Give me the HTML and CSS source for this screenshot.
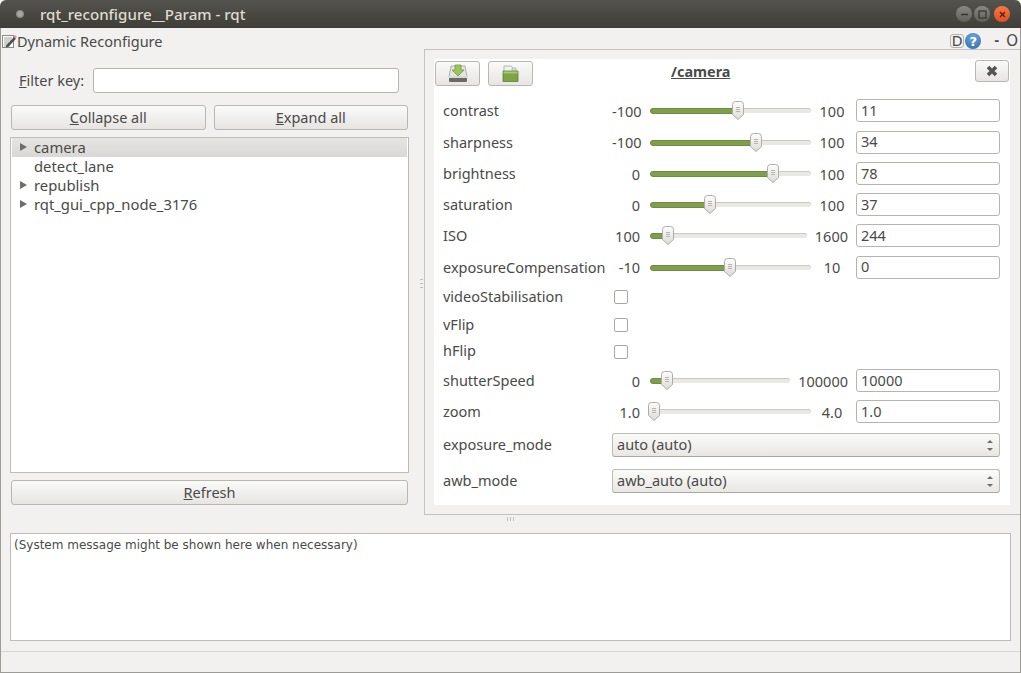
FILE: index.html
```html
<!DOCTYPE html>
<html lang="en">
<head>
<meta charset="utf-8">
<title>rqt_reconfigure__Param - rqt</title>
<link rel="stylesheet" href="styles.css">
</head>
<body>
<svg class="defs" width="0" height="0" aria-hidden="true">
  <defs>
    <linearGradient id="hg" x1="0" y1="0" x2="0" y2="1"><stop offset="0" stop-color="#fdfdfc"/><stop offset="1" stop-color="#dcdbd8"/></linearGradient>
    <symbol id="handle" viewBox="0 0 12 19">
      <path d="M.5 3.5a3 3 0 0 1 3-3h5a3 3 0 0 1 3 3v10L6 18.5.5 13.5z" fill="url(#hg)" stroke="#aeaca6"/>
      <path d="M4 6.5h4M4 8.5h4M4 10.5h4" stroke="#b4b3ae" stroke-width="1"/>
    </symbol>
  </defs>
</svg>
<div class="window">
  <header class="titlebar">
    <span class="tb-dot"></span>
    <span class="tb-title">rqt_reconfigure__Param - rqt</span>
    <span class="tb-btns">
      <span class="wbtn"><svg width="9" height="9" viewBox="0 0 9 9"><path d="M1 4.5h7" stroke="#33322f" stroke-width="1.4"/></svg></span>
      <span class="wbtn"><svg width="9" height="9" viewBox="0 0 9 9"><rect x="1" y="1" width="7" height="7" fill="none" stroke="#33322f" stroke-width="1.2"/></svg></span>
      <span class="wbtn wbtn-close"><svg width="9" height="9" viewBox="0 0 9 9"><path d="M2 2l5 5M7 2l-5 5" stroke="#5a1c08" stroke-width="1.4"/></svg></span>
    </span>
  </header>
  <div class="content">
    <div class="dock-title">
      <svg class="doc-icon" width="16" height="16" viewBox="0 0 16 16">
        <rect x="1.5" y="2.5" width="11" height="12" fill="#fff" stroke="#8a8a86"/>
        <path d="M3 5h8M3 7h7M3 9h5M3 11h4M3 13h6" stroke="#a0a09c"/>
        <path d="M5.500 12l7.500-8 2 1.800-7.500 8-2.800.8z" fill="#4e4e4a"/>
        <path d="M12.800 3.500l1-1.500 2 1.500-1 2z" fill="#d68ac4"/>
      </svg>
      <span class="dock-name">Dynamic Reconfigure</span>
      <span class="dock-tools">
        <span class="d-btn">D</span>
        <span class="help">?</span>
        <span class="dash">-</span>
        <span class="oh">O</span>
      </span>
    </div>
    <div class="main">
      <section class="left">
        <div class="filter">
          <label class="filter-label"><u>F</u>ilter key:</label>
          <input class="field filter-input" type="text">
        </div>
        <div class="btn-row">
          <button class="btn btn-half"><u>C</u>ollapse all</button>
          <button class="btn btn-half"><u>E</u>xpand all</button>
        </div>
        <ul class="tree">
          <li class="node selected"><span class="arrow"></span>camera</li>
          <li class="node"><span class="arrow arrow-none"></span>detect_lane</li>
          <li class="node"><span class="arrow"></span>republish</li>
          <li class="node"><span class="arrow"></span>rqt_gui_cpp_node_3176</li>
        </ul>
        <button class="btn btn-refresh"><u>R</u>efresh</button>
        <span class="vgrip"></span>
      </section>
      <section class="right">
        <div class="sheet">
          <div class="sheet-head">
            <button class="btn icon-btn">
              <svg width="22" height="20" viewBox="0 0 22 20">
                <path d="M4 2h14l2 11H2z" fill="#e4e4e0" stroke="#b0b0ac"/>
                <rect x="2" y="12" width="18" height="6" rx="1" fill="#6a6a66"/>
                <rect x="2" y="12" width="18" height="2" fill="#d8d8d4"/>
                <path d="M8 1h6v5h3l-6 6-6-6h3z" fill="#9cc65a" stroke="#76993f" stroke-width=".8"/>
              </svg>
            </button>
            <button class="btn icon-btn">
              <svg width="18" height="18" viewBox="0 0 18 18">
                <path d="M2 1h7l3 3v6H2z" fill="#f2f2f0" stroke="#b4b4b0"/>
                <path d="M10 3h4v4h-4z" fill="#d8d8d4" stroke="#b4b4b0" stroke-width=".7"/>
                <path d="M1 6h15v10.500H1z" fill="#7da346" stroke="#5f8232" stroke-width=".8"/>
                <path d="M1.500 6.500h14v2h-14z" fill="#a9c97a"/>
              </svg>
            </button>
            <span class="sheet-title">/camera</span>
            <button class="btn close-btn">
              <svg width="14" height="14" viewBox="0 0 14 14"><path d="M3 3l8 8M11 3l-8 8" stroke="#55554f" stroke-width="3.600"/></svg>
            </button>
          </div>

          <div class="row h31"><span class="name">contrast</span><span class="min">-100</span>
            <div class="slider" style="--v:.555"><span class="fill"></span><svg class="handle"><use href="#handle"/></svg></div>
            <span class="max">100</span><input class="field val" value="11"></div>
          <div class="row h32"><span class="name">sharpness</span><span class="min">-100</span>
            <div class="slider" style="--v:.67"><span class="fill"></span><svg class="handle"><use href="#handle"/></svg></div>
            <span class="max">100</span><input class="field val" value="34"></div>
          <div class="row h31"><span class="name">brightness</span><span class="min">0</span>
            <div class="slider" style="--v:.78"><span class="fill"></span><svg class="handle"><use href="#handle"/></svg></div>
            <span class="max">100</span><input class="field val" value="78"></div>
          <div class="row h31"><span class="name">saturation</span><span class="min">0</span>
            <div class="slider" style="--v:.37"><span class="fill"></span><svg class="handle"><use href="#handle"/></svg></div>
            <span class="max">100</span><input class="field val" value="37"></div>
          <div class="row h31"><span class="name">ISO</span><span class="min">100</span>
            <div class="slider slider-short" style="--v:.096"><span class="fill"></span><svg class="handle"><use href="#handle"/></svg></div>
            <span class="max">1600</span><input class="field val" value="244"></div>
          <div class="row h32"><span class="name">exposureCompensation</span><span class="min">-10</span>
            <div class="slider" style="--v:.5"><span class="fill"></span><svg class="handle"><use href="#handle"/></svg></div>
            <span class="max">10</span><input class="field val" value="0"></div>
          <div class="row h28"><span class="name name-up">videoStabilisation</span><span class="check"></span></div>
          <div class="row h27"><span class="name">vFlip</span><span class="check"></span></div>
          <div class="row h27"><span class="name name-up">hFlip</span><span class="check"></span></div>
          <div class="row h31"><span class="name">shutterSpeed</span><span class="min">0</span>
            <div class="slider slider-short" style="--v:.1"><span class="fill"></span><svg class="handle"><use href="#handle"/></svg></div>
            <span class="max">100000</span><input class="field val" value="10000"></div>
          <div class="row h31"><span class="name">zoom</span><span class="min">1.0</span>
            <div class="slider" style="--v:0"><span class="fill"></span><svg class="handle"><use href="#handle"/></svg></div>
            <span class="max">4.0</span><input class="field val" value="1.0"></div>
          <div class="row h36"><span class="name name-up">exposure_mode</span>
            <div class="combo">auto (auto)<span class="spin"><i class="up"></i><i class="down"></i></span></div></div>
          <div class="row h36"><span class="name name-up">awb_mode</span>
            <div class="combo">awb_auto (auto)<span class="spin"><i class="up"></i><i class="down"></i></span></div></div>
        </div>
      </section>
    </div>
    <div class="hsplit"><span class="hgrip"></span></div>
    <div class="message">(System message might be shown here when necessary)</div>
    <footer class="status"></footer>
  </div>
</div>
</body>
</html>
```
FILE: styles.css
```css
* { box-sizing: border-box; }
html, body { margin: 0; padding: 0; }
body {
  width: 1021px;
  height: 673px;
  overflow: hidden;
  background: #fff;
  font-family: "Noto Sans", "Open Sans", sans-serif;
  font-size: 14.5px;
  color: #4a4a48;
}
.defs { position: absolute; }
.window { display: flex; flex-direction: column; width: 1021px; height: 673px; }

.titlebar {
  display: flex;
  align-items: center;
  height: 28px;
  flex: none;
  padding: 0 11px 0 15px;
  border-radius: 6px 6px 0 0;
  background: linear-gradient(#55534d, #3e3d38);
  color: #dfdbd2;
}
.tb-dot {
  width: 8px;
  height: 8px;
  margin-left: 1px;
  border-radius: 50%;
  background: radial-gradient(circle, #a8a7a2 35%, #66655e 100%);
}
.tb-title { margin-left: 16px; font-size: 15.1px; font-weight: 500; }
.tb-btns { display: flex; gap: 2px; margin-left: auto; }
.wbtn {
  display: flex;
  align-items: center;
  justify-content: center;
  width: 16px;
  height: 16px;
  border-radius: 50%;
  background: linear-gradient(#8a8982, #5f5e58);
}
.wbtn-close { margin-left: 2px; background: linear-gradient(#f27a45, #e0501f); }

.content {
  display: flex;
  flex-direction: column;
  flex: 1;
  min-height: 0;
  border: 1px solid #9c9b96;
  border-top: 0;
  background: #f2f1f0;
}
.dock-title { display: flex; align-items: center; height: 21px; flex: none; padding-top: 5px; }
.doc-icon { flex: none; }
.dock-tools { display: flex; align-items: center; margin-left: auto; }
.d-btn {
  display: flex;
  align-items: center;
  justify-content: center;
  width: 14px;
  height: 14px;
  border: 1px solid #b4b3ae;
  border-radius: 3px;
  font: 14px "DejaVu Sans", sans-serif;
}
.help {
  display: flex;
  align-items: center;
  justify-content: center;
  width: 16px;
  height: 16px;
  margin-left: 1px;
  border-radius: 50%;
  background: radial-gradient(circle at 50% 30%, #6ea6dc, #2a6aa8);
  color: #fff;
  font: bold 13px "DejaVu Sans", sans-serif;
}
.dash { margin-left: 13px; font: bold 12px "DejaVu Sans", sans-serif; }
.oh { margin: 0 2px 0 7px; font: 15px "DejaVu Sans", sans-serif; }

.main { display: flex; height: 466px; flex: none; }
.left {
  position: relative;
  display: flex;
  flex-direction: column;
  width: 423px;
  flex: none;
  padding: 0 15px 0 9px;
}
.vgrip {
  position: absolute;
  left: 419px;
  top: 230px;
  width: 3px;
  height: 9px;
  border-top: 1px solid #c0bfba;
  border-bottom: 1px solid #c0bfba;
  background: linear-gradient(transparent 3px, #c0bfba 3px, #c0bfba 4px, transparent 4px);
}
.filter { display: flex; align-items: center; height: 25px; margin-top: 19px; flex: none; padding-left: 9px; }
.filter-label { width: 74px; flex: none; margin-top: -2px; }
.filter-input { width: 306px; height: 25px; }
.field {
  border: 1px solid #b6b4ae;
  border-radius: 3px;
  background: #fff;
  color: #4a4a48;
  font: 14.5px "Noto Sans", sans-serif;
  padding: 0 4px 2px;
  outline: none;
}
.btn-row { display: flex; gap: 8px; margin-top: 12px; padding: 0 1px; flex: none; }
.btn {
  display: flex;
  align-items: center;
  justify-content: center;
  padding: 0 0 2px;
  border: 1px solid #b9b7b0;
  border-radius: 3px;
  background: linear-gradient(#fafaf9, #e6e5e2);
  color: #4a4a48;
  font: 14.5px "Noto Sans", sans-serif;
}
.btn-half { flex: 1; height: 25px; }
.tree {
  height: 336px;
  margin: 7px 0 0;
  padding: 0 1px;
  list-style: none;
  flex: none;
  border: 1px solid #bdbcb6;
  background: #fff;
  font-size: 14.8px;
}
.node { display: flex; align-items: center; height: 19px; padding: 0 0 2px 8px; }
.selected { background: linear-gradient(#e6e4e1, #dad8d4); }
.arrow {
  width: 0;
  height: 0;
  margin-right: 7px;
  border-left: 7px solid #6e6e6a;
  border-top: 4px solid transparent;
  border-bottom: 4px solid transparent;
}
.arrow-none { border-left-color: transparent; }
.btn-refresh { height: 25px; margin: 7px 1px 0; flex: none; }

.right {
  flex: 1;
  padding: 9px 10px 9px 9px;
  border: 1px solid #c4c2bc;
  border-right: 0;
}
.sheet { height: 446px; background: #fff; }
.sheet-head { position: relative; display: flex; align-items: flex-start; height: 36px; padding: 2px 0 0 1px; }
.icon-btn { width: 45px; height: 25px; margin-right: 8px; padding: 0; }
.sheet-title { margin: 1px 0 0 130px; font-size: 14.4px; font-weight: 700; text-decoration: underline; }
.close-btn { width: 34px; height: 22px; margin: -1px 1px 0 auto; padding: 0; }

.row { display: flex; align-items: center; padding: 0 10px 0 9px; }
.h27 { height: 27px; }
.h28 { height: 28px; }
.h31 { height: 31px; }
.h32 { height: 32px; }
.h36 { height: 36px; }
.name { width: 169px; flex: none; margin-top: -1px; }
.name-up { margin-top: -3px; }
.min { width: 28px; flex: none; text-align: right; }
.max { min-width: 32px; margin-left: 5px; flex: none; text-align: center; }
.slider {
  position: relative;
  flex: 1;
  height: 5px;
  margin-left: 10px;
  border-radius: 3px;
  border-top: 1px solid #c9c8c2;
  background: #e9e8e5;
}
.slider-short { margin-right: 3px; }
.fill {
  position: absolute;
  left: 0;
  top: -1px;
  height: 6px;
  width: calc(var(--v) * (100% - 9px) + 4px);
  border-radius: 3px;
  border: 1px solid #6f8c3f;
  background: #7f9f4c;
}
.handle {
  position: absolute;
  top: -8px;
  left: calc(var(--v) * (100% - 9px) - 2px);
  width: 12px;
  height: 19px;
}
.val { width: 144px; height: 23px; margin-left: 8px; flex: none; }
.check {
  width: 14px;
  height: 14px;
  margin-left: 2px;
  border: 1px solid #a9a7a1;
  border-radius: 2px;
  background: #fff;
}
.combo {
  display: flex;
  align-items: center;
  justify-content: space-between;
  width: 388px;
  height: 24px;
  padding: 0 6px 2px 4px;
  border: 1px solid #bdbbb5;
  border-bottom-color: #a9a7a1;
  border-radius: 3px;
  background: linear-gradient(#fbfbfa, #e8e7e4);
}
.spin { display: flex; flex-direction: column; gap: 5px; margin-top: 2px; }
.spin i { display: block; width: 0; height: 0; border-left: 3px solid transparent; border-right: 3px solid transparent; }
.spin .up { border-bottom: 3px solid #6e6e68; }
.spin .down { border-top: 3px solid #6e6e68; }

.hsplit { display: flex; justify-content: center; height: 18px; flex: none; padding-top: 2px; }
.hgrip {
  width: 8px;
  height: 4px;
  margin-left: 1px;
  background: repeating-linear-gradient(90deg, #c0bfba 0 1px, transparent 1px 3px);
}
.message {
  height: 108px;
  margin: 0 9px;
  flex: none;
  padding: 4px 3px;
  border: 1px solid #bdbcb6;
  background: #fff;
  font: 12px "DejaVu Sans", sans-serif;
}
.status { flex: 1; margin-top: 10px; border-top: 1px solid #d8d7d3; }
```
